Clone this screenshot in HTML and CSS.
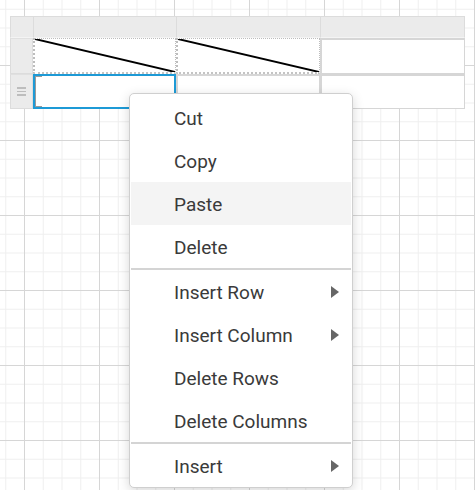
FILE: index.html
```html
<!DOCTYPE html>
<html>
<head>
<meta charset="utf-8">
<link rel="stylesheet" href="styles.css">
</head>
<body>
<div class="canvas">
  <div class="sheet">
    <div class="cell corner"></div>
    <div class="cell colhead"></div>
    <div class="cell colhead"></div>
    <div class="cell colhead last"></div>

    <div class="cell rowhead"></div>
    <div class="cell dotted"><svg class="diag" viewBox="0 0 100 100" preserveAspectRatio="none"><line x1="0" y1="0" x2="100" y2="100" vector-effect="non-scaling-stroke"/></svg></div>
    <div class="cell dotted"><svg class="diag" viewBox="0 0 100 100" preserveAspectRatio="none"><line x1="0" y1="0" x2="100" y2="100" vector-effect="non-scaling-stroke"/></svg></div>
    <div class="cell plain"></div>

    <div class="cell rowhead"><span class="grip"><i></i><i></i><i></i></span></div>
    <div class="cell selected"><span class="bracket"></span></div>
    <div class="cell plain"></div>
    <div class="cell plain"></div>
  </div>

  <div class="menu">
    <div class="item">Cut</div>
    <div class="item">Copy</div>
    <div class="item hover">Paste</div>
    <div class="item">Delete</div>
    <div class="sep"></div>
    <div class="item">Insert Row<span class="arrow"></span></div>
    <div class="item">Insert Column<span class="arrow"></span></div>
    <div class="item">Delete Rows</div>
    <div class="item">Delete Columns</div>
    <div class="sep"></div>
    <div class="item">Insert<span class="arrow"></span></div>
  </div>
</div>
</body>
</html>
```

FILE: styles.css
```css
html, body {
  margin: 0;
  padding: 0;
}
body {
  width: 475px;
  height: 490px;
  overflow: hidden;
  font-family: Roboto, "Liberation Sans", sans-serif;
  background-color: #fff;
  background-image:
    linear-gradient(to right, #d6d6d6 1px, transparent 1px),
    linear-gradient(to bottom, #d6d6d6 1px, transparent 1px),
    linear-gradient(to right, #efefef 1px, transparent 1px),
    linear-gradient(to bottom, #efefef 1px, transparent 1px);
  background-size: 75px 75px, 75px 75px, 18.75px 18.75px, 18.75px 18.75px;
  background-position: 24px 65px, 24px 65px, 24px 65px, 24px 65px;
}
.canvas {
  position: relative;
  width: 475px;
  height: 490px;
  padding: 16px 0 0 10px;
  box-sizing: border-box;
}
.sheet {
  display: grid;
  grid-template-columns: 23px 143px 144px 145px;
  grid-template-rows: 22px 36px 35px;
  width: 455px;
  background: #fff;
}
.cell {
  box-sizing: border-box;
  position: relative;
}
.corner, .colhead {
  background: #ebebeb;
  border-top: 1px solid #dcdcdc;
  border-left: 1px solid #dcdcdc;
  border-bottom: 1px solid #f4f4f4;
}
.colhead.last {
  border-right: 1px solid #dcdcdc;
}
.rowhead {
  background: #ebebeb;
  border: 1px solid #dcdcdc;
  border-top: 1px solid #e0e0e0;
  display: flex;
  align-items: center;
  justify-content: center;
}
.dotted {
  border: 1px dotted #bdbdbd;
  border-left: 2px dotted #bdbdbd;
  border-bottom: 2px dotted #c4c4c4;
}
.diag {
  display: block;
  width: 100%;
  height: 100%;
}
.diag line {
  stroke: #000;
  stroke-width: 1.9;
}
.plain {
  border: 1px solid #d6d6d6;
  border-left: 2px solid #d6d6d6;
  border-top: 2px solid #d6d6d6;
}
.selected {
  border: 2px solid #1d9ad6;
}
.bracket {
  position: absolute;
  left: 0;
  top: 0;
  bottom: 0;
  width: 7px;
  border: 1px solid #9a9a9a;
  border-right: none;
  box-sizing: border-box;
}
.grip {
  display: flex;
  flex-direction: column;
  gap: 2px;
}
.grip i {
  display: block;
  width: 9px;
  height: 1.5px;
  background: #bdbdbd;
}

.menu {
  position: absolute;
  left: 129px;
  top: 93px;
  width: 224px;
  box-sizing: border-box;
  background: #fff;
  border: 1px solid #cfcfcf;
  border-radius: 5px;
  padding: 2px 1px 0;
  box-shadow: 0 3px 12px rgba(0, 0, 0, 0.16);
}
.item {
  height: 43px;
  display: flex;
  align-items: center;
  padding: 1px 12px 0 43px;
  box-sizing: border-box;
  font-size: 19px;
  color: #3a3a3a;
}
.item.hover {
  background: #f4f4f4;
}
.arrow {
  margin-left: auto;
  width: 0;
  height: 0;
  border-left: 8px solid #666;
  border-top: 6px solid transparent;
  border-bottom: 6px solid transparent;
}
.sep {
  height: 2px;
  background: #d4d4d4;
}
```
